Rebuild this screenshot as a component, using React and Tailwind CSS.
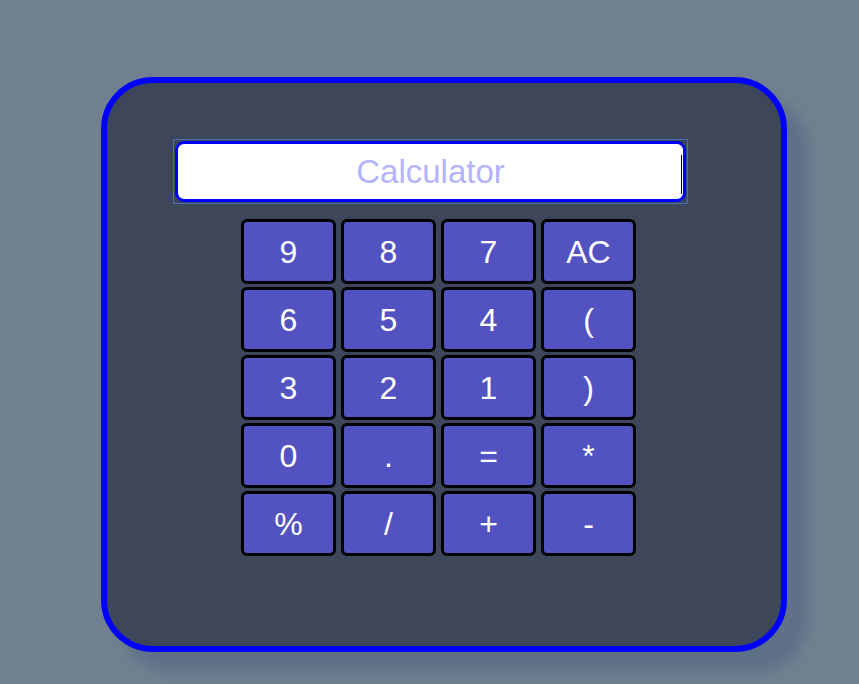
const keys = ['9', '8', '7', 'AC', '6', '5', '4', '(', '3', '2', '1', ')', '0', '.', '=', '*', '%', '/', '+', '-'];

export default function App() {
  return (
    <div className="min-h-screen w-full bg-[#708090] pt-[77px] pl-[101px]" style={{ fontFamily: '"Liberation Sans", Arial, sans-serif' }}>
      <div className="w-[686px] h-[575px] rounded-[52px] border-[6px] border-[#0000ff] bg-[#3d4759] shadow-[20px_20px_12px_rgba(55,81,117,0.32)]">
        <div className="ml-[66px] mt-[56px] w-[515px] border border-[#4a72b0] p-px">
          <div className="relative h-[61px] rounded-[9px] border-[3px] border-[#0000ff] bg-white flex items-center justify-center">
            <span className="text-[33px] text-[#b3b3ff] leading-none">Calculator</span>
            <span className="absolute right-[1px] top-[11px] h-[39px] w-px bg-black" />
          </div>
        </div>
        <div className="ml-[134px] mt-[15px] grid grid-cols-[repeat(4,95px)] gap-x-[5px] gap-y-[3px]">
          {keys.map(k => (
            <button
              key={k}
              className="h-[65px] rounded-[6px] border-[3px] border-black bg-[#5352c1] text-white text-[32px] leading-none flex items-center justify-center"
            >
              {k}
            </button>
          ))}
        </div>
      </div>
    </div>
  );
}
